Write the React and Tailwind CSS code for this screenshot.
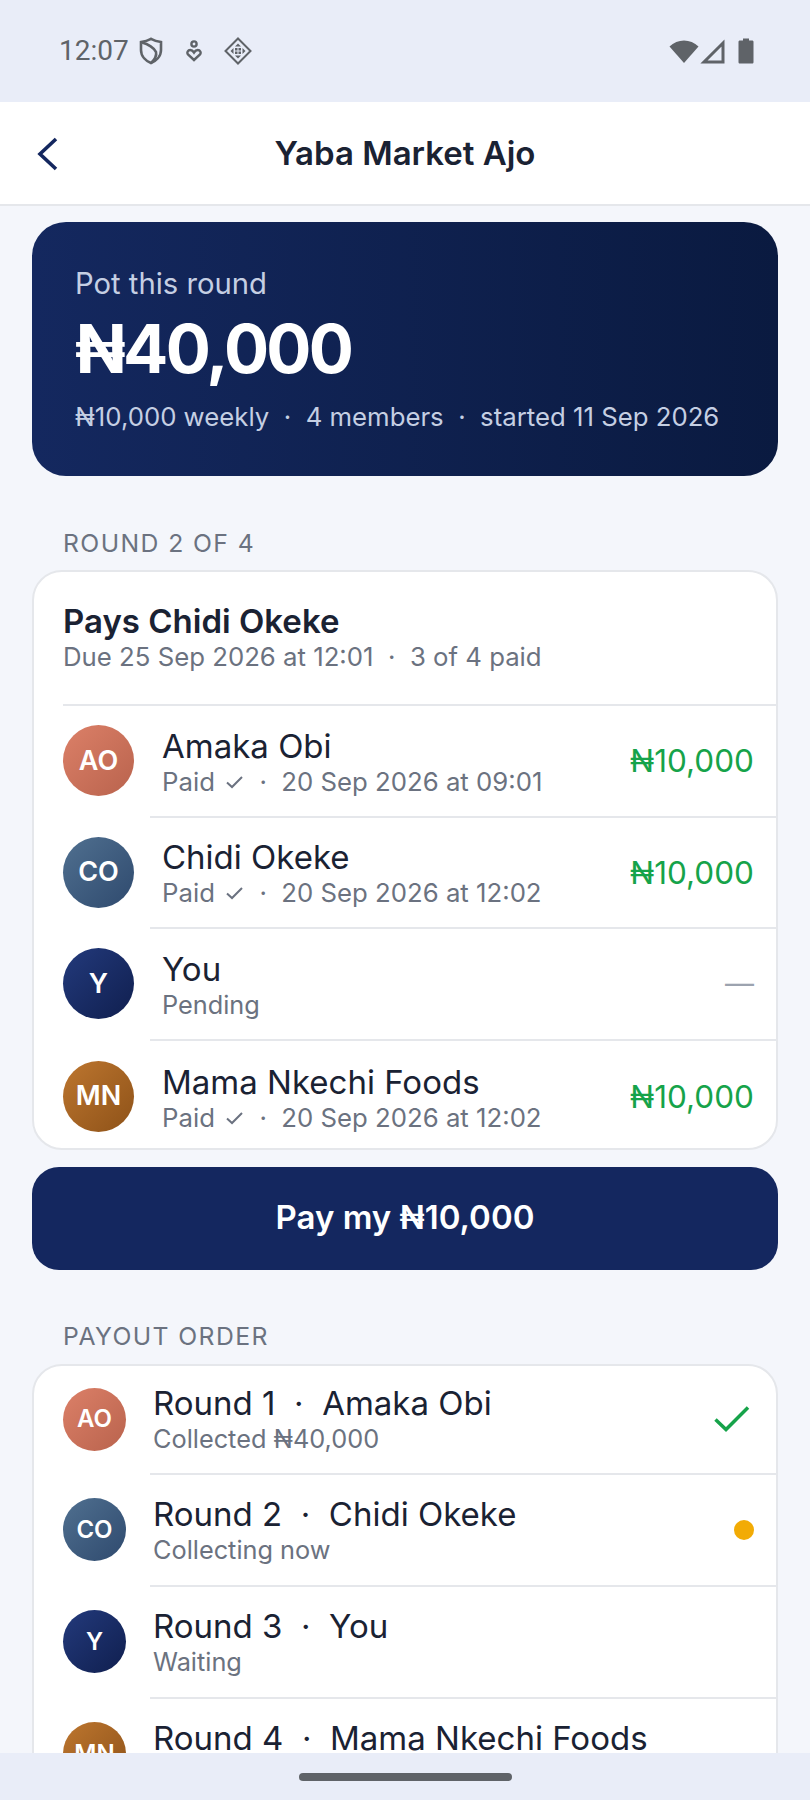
import React from "react";

const avatarColors = {
  AO: "bg-linear-to-br from-[#dc8068] to-[#b9634d]",
  CO: "bg-linear-to-br from-[#507090] to-[#2f4a6e]",
  Y: "bg-linear-to-br from-[#233a7c] to-[#101f4f]",
  MN: "bg-linear-to-br from-[#bd762f] to-[#8e5218]",
};

const members = [
  { initials: "AO", name: "Amaka Obi", when: "20 Sep 2026 at 09:01", amount: "₦10,000" },
  { initials: "CO", name: "Chidi Okeke", when: "20 Sep 2026 at 12:02", amount: "₦10,000" },
  { initials: "Y", name: "You", pending: true },
  { initials: "MN", name: "Mama Nkechi Foods", when: "20 Sep 2026 at 12:02", amount: "₦10,000" },
];

const payouts = [
  { initials: "AO", name: "Amaka Obi", sub: "Collected ₦40,000", state: "done" },
  { initials: "CO", name: "Chidi Okeke", sub: "Collecting now", state: "now" },
  { initials: "Y", name: "You", sub: "Waiting" },
  { initials: "MN", name: "Mama Nkechi Foods", sub: "Waiting" },
];

const SEP = "\u00a0\u00a0·\u00a0\u00a0";

const Avatar = ({ initials, big }) => (
  <div
    className={`flex shrink-0 items-center justify-center rounded-full font-semibold text-white ${avatarColors[initials]} ${
      big ? "h-[71px] w-[71px] text-[27px]" : "h-[63px] w-[63px] text-[24px]"
    }`}
  >
    {initials}
  </div>
);

const StatusBar = () => (
  <div className="flex h-[102px] shrink-0 items-center justify-between bg-[#e9edf8] pl-[59px] pr-[56px] text-[#5f6368]">
    <div className="flex items-center">
      <span className="font-['Roboto',sans-serif] text-[28px] leading-none">12:07</span>
      <svg width="24" height="28" viewBox="0 0 24 28" className="ml-[10px]" fill="none" stroke="currentColor" strokeWidth="2.6">
        <path d="M12 1.8 C15 3.4 18 4.4 22 5 V13 C22 19.5 17 24 12 26 C7 24 2 19.5 2 13 V5 C6 4.4 9 3.4 12 1.8 Z" />
        <path d="M3 5.5 C9 7 15.5 11 17 15 C18 18.5 15.5 23 12.5 25.5" />
      </svg>
      <svg width="16" height="22" viewBox="0 0 16 22" className="ml-[23px]" fill="none" stroke="currentColor" strokeWidth="2.4">
        <circle cx="8" cy="4" r="2.6" />
        <path d="M8 20 L2 14.5 C0.5 12.5 2 10 4.2 10 C6 10 7 11 8 12.5 C9 11 10 10 11.8 10 C14 10 15.5 12.5 14 14.5 Z" />
      </svg>
      <svg width="28" height="28" viewBox="0 0 28 28" className="ml-[22px]" fill="none" stroke="currentColor" strokeWidth="2">
        <path d="M14 1.5 L26.5 14 L14 26.5 L1.5 14 Z" />
        <path d="M14 6.5 L17 9.5 H11 Z M14 21.5 L11 18.5 H17 Z M6.5 14 L9.5 11 V17 Z M21.5 14 L18.5 11 V17 Z M11 11 H13.5 V13.5 H11 Z M14.5 11 H17 V13.5 H14.5 Z M11 14.5 H13.5 V17 H11 Z M14.5 14.5 H17 V17 H14.5 Z" fill="currentColor" stroke="none" />
      </svg>
    </div>
    <div className="flex items-center">
      <svg width="30" height="26" viewBox="0 0 30 26" fill="currentColor">
        <path d="M0.5 8.5 C8.5 0.5 21.5 0.5 29.5 8.5 L15 25 Z" />
      </svg>
      <svg width="25" height="25" viewBox="0 0 25 25" className="ml-[1px]" fill="none" stroke="currentColor" strokeWidth="3">
        <path d="M23 4 V23 H4 Z" />
      </svg>
      <svg width="16" height="26" viewBox="0 0 16 26" className="ml-[13px]" fill="currentColor">
        <path d="M5 0.5 H11 V2.5 H14 C15 2.5 15.5 3 15.5 4 V24 C15.5 25 15 25.5 14 25.5 H2 C1 25.5 0.5 25 0.5 24 V4 C0.5 3 1 2.5 2 2.5 H5 Z" />
      </svg>
    </div>
  </div>
);

const MemberRow = ({ member, last }) => (
  <div className={`flex items-center pl-[29px] pr-[22px] ${last ? "h-[107px] pt-[5px]" : "h-[109.5px]"}`}>
    <Avatar initials={member.initials} big />
    <div className="ml-[28px] flex h-full min-w-0 flex-1 flex-col justify-center pt-[2px]">
      <div className="text-[33px] leading-[40px] text-[#1a2233]">{member.name}</div>
      <div className="flex items-center whitespace-pre text-[25.75px] leading-[32px] text-[#6b7280]">
        {member.pending ? (
          <span className="text-[25.3px]">Pending</span>
        ) : (
          <>
            Paid
            <svg width="20" height="14" viewBox="0 0 20 14" className="ml-[10px]" fill="none" stroke="currentColor" strokeWidth="2">
              <path d="M2 7.5 L7 12 L17 2" />
            </svg>
            <span>{SEP}</span>
            {member.when}
          </>
        )}
      </div>
    </div>
    {member.pending ? (
      <div className="text-[29px] text-[#9ca3af]">—</div>
    ) : (
      <div className="text-[31.5px] text-[#16a34a]">{member.amount}</div>
    )}
  </div>
);

const PayoutRow = ({ payout, index }) => (
  <div className={`flex items-center pl-[29px] pr-[22px] ${index === 0 ? "h-[107px]" : "h-[110px]"}`}>
    <Avatar initials={payout.initials} />
    <div className="ml-[27px] flex min-w-0 flex-1 flex-col">
      <div className="text-[33px] leading-[40px] text-[#1a2233]">
        Round {index + 1}
        {SEP}
        {payout.name}
      </div>
      <div className="text-[25.3px] leading-[32px] text-[#6b7280]">{payout.sub}</div>
    </div>
    {payout.state === "done" && (
      <svg width="36" height="28" viewBox="0 0 36 28" fill="none" stroke="#16a34a" strokeWidth="3.5" className="mr-[4px]">
        <path d="M1.5 14.5 L12 24.5 L34 2.5" />
      </svg>
    )}
    {payout.state === "now" && <div className="h-[20px] w-[20px] rounded-full bg-[#f2ab05]" />}
  </div>
);

export default function App() {
  return (
    <div className="flex h-[1800px] w-[810px] flex-col overflow-hidden bg-[#f4f6fb] font-['Inter',sans-serif]">
      <StatusBar />

      <div className="relative flex h-[104px] shrink-0 items-center justify-center border-b-2 border-[#e5e7eb] bg-white pt-[1px]">
        <svg width="24" height="36" viewBox="0 0 24 36" className="absolute left-[36px] top-[34px]" fill="none" stroke="#14275f" strokeWidth="3.6">
          <path d="M20 3 L4 18 L20 33" />
        </svg>
        <h1 className="text-[33px] font-semibold text-[#1a2233]">Yaba Market Ajo</h1>
      </div>

      <div className="min-h-0 flex-1 overflow-hidden px-[32px] pt-[16px]">
        <div className="h-[254px] rounded-[34px] bg-linear-to-r from-[#14285f] to-[#0a1a40] pl-[43px] pt-[45px] text-white">
          <div className="text-[29.25px] leading-[34px] text-[#c5cfe3]">Pot this round</div>
          <div className="mt-[10px] text-[67px] font-bold leading-[76px] tracking-[-2.7px]">₦40,000</div>
          <div className="mt-[14px] text-[25.75px] leading-[32px] text-[#c5cfe3]">
            ₦10,000 weekly{SEP}4 members{SEP}started 11 Sep 2026
          </div>
        </div>

        <div className="mt-[52px] pl-[31px] text-[24.75px] leading-[30px] tracking-[1.4px] text-[#6b7280]">ROUND 2 OF 4</div>
        <div className="mt-[12px] overflow-hidden rounded-[30px] border-2 border-[#e5e7eb] bg-white">
          <div className="h-[132px] pl-[29px] pt-[29px]">
            <div className="text-[33px] font-semibold leading-[40px] text-[#1a2233]">Pays Chidi Okeke</div>
            <div className="text-[25.75px] leading-[32px] text-[#6b7280]">
              Due 25 Sep 2026 at 12:01{SEP}3 of 4 paid
            </div>
          </div>
          <div className="ml-[29px] h-[2px] bg-[#e5e7eb]" />
          {members.map((member, i) => (
            <div key={member.initials}>
              {i > 0 && <div className="ml-[116px] h-[2px] bg-[#e5e7eb]" />}
              <MemberRow member={member} last={i === members.length - 1} />
            </div>
          ))}
        </div>

        <button className="mt-[17px] flex h-[103px] w-full items-center justify-center rounded-[27px] bg-[#14275f] text-[33px] font-semibold text-white">
          Pay my ₦10,000
        </button>

        <div className="mt-[51px] pl-[31px] text-[24.75px] leading-[30px] tracking-[1.4px] text-[#6b7280]">PAYOUT ORDER</div>
        <div className="mt-[13px] overflow-hidden rounded-[30px] border-2 border-[#e5e7eb] bg-white">
          {payouts.map((payout, i) => (
            <div key={payout.initials}>
              {i > 0 && <div className="ml-[116px] h-[2px] bg-[#e5e7eb]" />}
              <PayoutRow payout={payout} index={i} />
            </div>
          ))}
        </div>
      </div>

      <div className="flex h-[47px] shrink-0 items-center justify-center bg-[#e9edf8]">
        <div className="h-[8px] w-[213px] rounded-full bg-[#5f6368]" />
      </div>
    </div>
  );
}
